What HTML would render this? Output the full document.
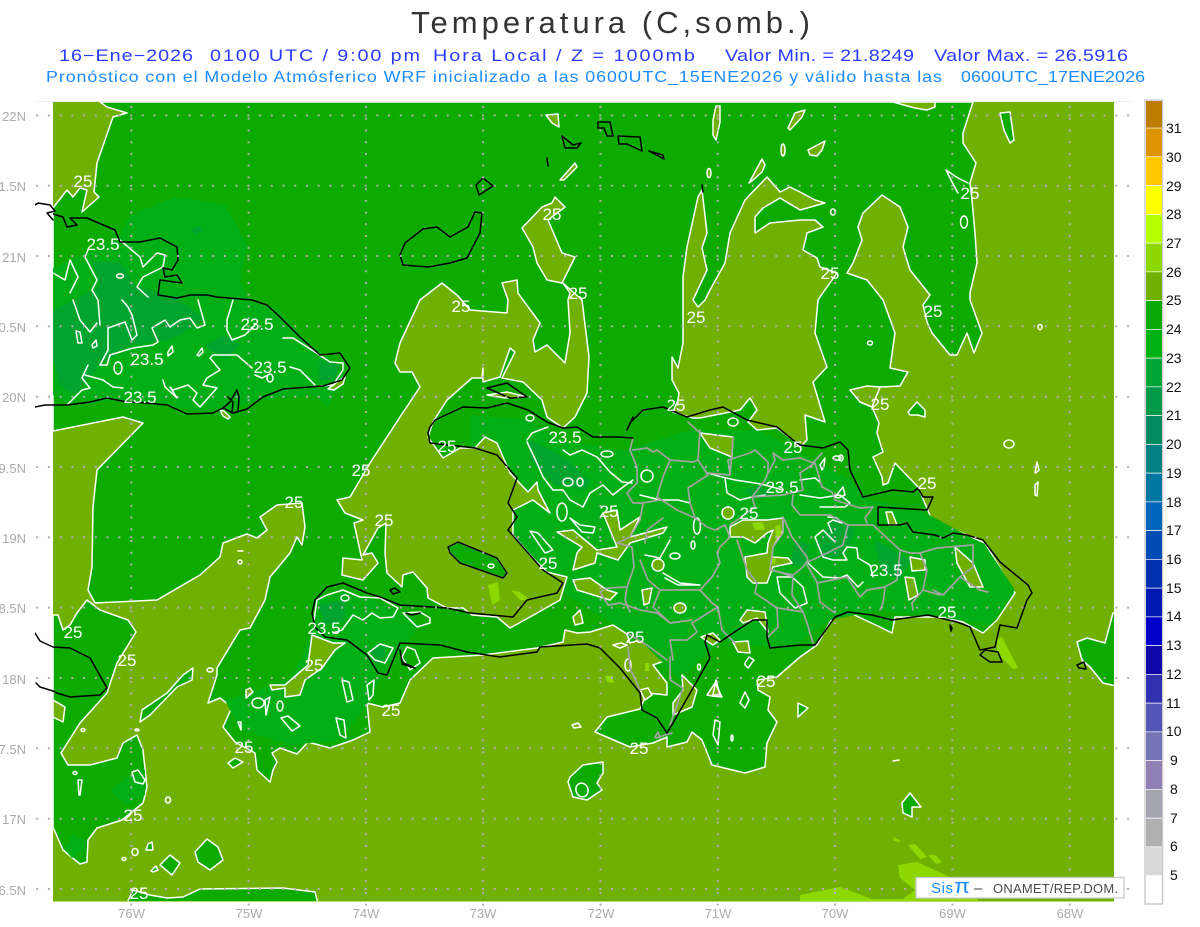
<!DOCTYPE html>
<html><head><meta charset="utf-8"><title>Temperatura</title>
<style>
html,body{margin:0;padding:0;background:#fff;width:1200px;height:927px;overflow:hidden}
svg{display:block;font-family:"Liberation Sans",sans-serif}
.w{fill:none;stroke:#fff;stroke-width:1.5;stroke-linejoin:round;stroke-linecap:round}
.o{fill:#70b000;stroke:#fff;stroke-width:1.5;stroke-linejoin:round}
.g{fill:#0aaa05;stroke:#fff;stroke-width:1.5;stroke-linejoin:round}
.l{fill:#03ae12;stroke:none}
.d{fill:#00a42e;stroke:none}
.y{fill:#8cd800;stroke:none}
.k{fill:none;stroke:#000;stroke-width:1.5;stroke-linejoin:round;stroke-linecap:round}
.p{fill:none;stroke:#a3a3a3;stroke-width:1.7;stroke-linejoin:round;stroke-linecap:round}
.t{fill:#fff;font-size:17px;text-anchor:middle}
.a{fill:#aaa;font-size:13px}
.c{fill:#111;font-size:14px}
</style></head><body>
<svg width="1200" height="927" viewBox="0 0 1200 927" xmlns="http://www.w3.org/2000/svg">
<defs><filter id="s" x="0" y="0" width="1" height="1"><feGaussianBlur stdDeviation="0.25"/></filter></defs>
<rect width="1200" height="927" fill="#fff"/>
<!-- Titles -->
<text x="411" y="33" font-size="31" fill="#333" textLength="399" lengthAdjust="spacing">Temperatura (C,somb.)</text>
<g font-size="16.5" fill="#2b3cff">
<text transform="translate(59,61) scale(1.2,1)" textLength="111.7" lengthAdjust="spacing">16−Ene−2026</text>
<text transform="translate(210,61) scale(1.2,1)" textLength="175" lengthAdjust="spacing">0100 UTC / 9:00 pm</text>
<text transform="translate(433,61) scale(1.2,1)" textLength="218.3" lengthAdjust="spacing">Hora Local / Z = 1000mb</text>
<text transform="translate(725,61) scale(1.2,1)" textLength="157.5" lengthAdjust="spacing">Valor Min. = 21.8249</text>
<text transform="translate(934,61) scale(1.2,1)" textLength="161.7" lengthAdjust="spacing">Valor Max. = 26.5916</text>
</g>
<g font-size="15.5" fill="#1a8cff">
<text transform="translate(46,82) scale(1.15,1)" textLength="779" lengthAdjust="spacing">Pronóstico con el Modelo Atmósferico WRF inicializado a las 0600UTC_15ENE2026 y válido hasta las</text>
<text transform="translate(961,82) scale(1.15,1)" textLength="160" lengthAdjust="spacing">0600UTC_17ENE2026</text>
</g>
<line x1="34" y1="101.5" x2="1134" y2="101.5" stroke="#eee"/>
<clipPath id="m"><rect x="53" y="102" width="1061" height="799"/></clipPath>
<rect x="53" y="102" width="1061" height="799" fill="#70b000"/>
<g filter="url(#s)">
<g clip-path="url(#m)">
<!-- main green -->
<polygon class="g" points="100,102 107,107 127,113 113,117 97,163 94,192 99,197 82,212 87,190 80,188 73,197 67,190 53,208 53,431 123,417 143,423 97,470 93,507 92,567 88,590 95,603 157,600 200,575 220,557 223,543 247,534 257,538 267,530 260,517 277,505 302,503 305,527 302,545 297,537 290,553 270,577 265,600 250,628 240,630 217,668 217,675 208,703 220,698 232,707 223,727 235,742 255,753 257,770 270,782 273,770 277,762 272,753 280,748 297,754 308,742 330,748 353,740 370,732 367,703 383,707 400,703 410,680 433,658 483,655 537,648 563,642 565,630 577,633 590,632 613,625 627,634 630,643 640,640 655,645 667,660 653,665 667,683 667,695 647,693 640,709 607,717 595,732 630,747 653,743 667,737 667,747 687,742 692,732 702,740 712,765 745,773 765,767 767,743 777,722 768,710 770,697 758,690 757,680 777,677 800,657 817,645 833,617 848,612 880,627 892,633 895,617 940,617 963,622 983,633 997,620 1015,593 985,543 955,530 932,520 918,487 895,463 888,483 883,485 882,477 873,457 883,452 877,433 879,423 872,407 880,387 900,386 908,372 890,368 895,333 883,300 867,280 847,273 853,263 862,240 858,227 863,213 882,195 900,207 908,227 903,247 910,270 930,295 923,305 927,322 932,333 950,355 957,355 967,333 974,353 982,333 970,300 970,293 977,263 975,233 972,200 970,183 976,163 963,143 963,133 973,102"/>
<!-- Soft shade patches -->
<polygon class="l" points="53,268 90,250 118,238 130,215 175,197 225,205 247,245 240,280 248,300 280,310 300,335 330,360 345,375 328,407 315,395 260,400 230,410 190,410 130,400 70,405 53,395"/>
<polygon class="d" points="53,310 75,300 100,285 92,262 120,262 135,285 180,300 205,320 170,340 130,345 100,365 75,395 60,385 53,360"/>
<polygon class="d" points="320,360 340,365 335,380 318,380"/>
<polygon class="d" points="190,230 198,226 204,230 196,234"/>
<polygon class="d" points="205,345 225,335 240,345 225,360"/>
<polygon class="l" points="470,415 530,420 560,440 625,450 690,430 760,430 850,480 870,500 920,510 985,545 1015,590 990,625 960,620 880,610 830,620 790,650 720,640 680,680 640,640 590,610 560,590 510,530 470,470"/>
<polygon class="d" points="530,440 560,455 590,480 585,490 555,485 530,460"/>
<polygon class="d" points="835,515 855,530 845,555 825,560 815,545"/>
<polygon class="d" points="795,540 810,545 805,565 790,565"/>
<polygon class="d" points="745,490 760,485 770,495 755,500"/>
<polygon class="d" points="875,540 910,560 900,580 880,570"/>
<polygon class="l" points="317,600 345,590 400,610 420,625 385,670 370,700 340,740 290,745 240,730 225,700 290,680 310,640"/>
<polygon class="d" points="318,605 345,600 345,620 325,625"/>
<polygon class="d" points="370,650 385,645 385,660 375,665"/>
<polygon class="l" points="65,810 90,775 120,760 145,770 140,800 100,825 70,825"/>
<!-- Central olive -->
<polygon class="o" points="420,300 442,283 457,295 470,310 507,313 508,300 502,283 517,280 518,293 523,300 540,323 533,340 535,352 547,345 565,363 570,333 568,300 570,293 563,283 582,300 589,357 587,393 575,417 563,428 547,417 542,400 523,382 502,378 515,352 510,348 500,377 483,382 483,368 482,378 472,378 447,400 433,422 428,437 443,458 460,448 475,448 485,437 497,443 510,473 528,492 537,482 538,490 550,513 533,500 513,510 513,535 532,557 547,572 567,577 563,590 560,600 530,617 510,628 497,617 472,615 463,608 447,608 428,598 427,588 413,572 403,575 402,587 387,573 385,553 386,523 378,528 363,555 372,553 378,563 363,580 342,575 343,558 362,560 354,523 363,520 345,513 337,500 350,497 370,463 400,417 420,387 412,372 400,372 395,363 400,343"/>
<polygon class="o" points="555,197 565,207 548,220 562,253 575,257 562,283 547,280 537,263 533,247 522,228 542,207 552,203"/>
<!-- Gonave -->
<polygon class="g" points="448,547 458,542 497,558 507,573 503,578 460,563 450,553"/>
<ellipse class="w" cx="491" cy="566" rx="3" ry="2"/>
<!-- Tortuga olive -->
<polygon class="o" points="487,395 507,392 527,397 505,398"/>
<!-- Cuba south slivers -->
<polygon class="o" points="220,410 224,411 230,417 228,419 223,416"/>
<polygon class="o" points="328,389 340,380 345,377 343,384 334,390"/>
<!-- Olive C -->
<polygon class="o" points="767,177 780,192 790,187 800,192 815,200 825,203 800,210 780,198 763,208 755,217 755,233 770,223 800,220 815,220 823,227 807,233 803,250 817,258 820,267 837,273 820,297 818,300 815,333 827,367 813,382 825,422 805,415 807,440 800,447 793,440 777,428 757,430 748,422 757,410 750,398 740,410 700,418 693,418 673,412 678,400 679,393 672,380 672,357 678,368 683,343 683,277 687,247 698,197 702,190 707,233 702,248 707,270 693,300 698,307 705,300 710,290 725,263 730,233 745,200"/>
<!-- Upper small olive -->
<polygon class="o" points="788,128 795,113 805,110 802,117 790,130"/>
<polygon class="o" points="713,120 716,106 720,106 720,122 716,140 713,135"/>
<polygon class="o" points="749,183 762,159 765,165 762,172 753,180"/>
<polygon class="o" points="808,150 825,141 822,150 817,156 810,155"/>
<polygon class="o" points="893,102 915,108 927,110 935,107 935,102"/>
<polygon class="o" points="546,115 558,114 559,127 552,123"/>
<polygon class="o" points="560,180 575,163 577,167 564,180"/>
<polygon class="o" points="880,387 867,386 850,390 860,402 872,407"/>
<ellipse class="o" cx="783" cy="150" rx="2" ry="6"/>
<ellipse class="o" cx="709" cy="173" rx="2" ry="4.5"/>
<!-- Spur on the right -->
<polyline class="w" points="968,183 958,178 946,170 952,182 958,193"/>
<ellipse class="w" cx="964" cy="222" rx="3.5" ry="6"/>
<ellipse class="w" cx="833" cy="212" rx="2.5" ry="3"/>
<!-- Other green bodies -->
<polygon class="g" points="1000,113 1010,112 1014,140 1010,143 1004,130"/>
<polygon class="g" points="53,615 58,615 63,630 70,625 77,613 87,600 100,610 128,620 136,632 117,663 107,693 80,723 61,753 68,765 90,765 117,758 123,743 137,735 143,750 147,787 143,803 122,820 97,828 88,840 87,862 80,864 63,850 53,827"/>
<polygon class="o" points="53,700 65,707 63,722 53,717"/>
<polygon class="l" points="110,790 130,775 145,770 145,795 125,805"/>
<polygon class="l" points="65,850 72,835 85,840 85,850 72,858"/>
<polygon class="g" points="140,722 142,710 167,693 183,675 193,668 192,680 177,687 150,715"/>
<polygon class="g" points="195,852 207,839 218,847 223,860 210,870 198,862"/>
<polygon class="g" points="160,865 170,855 180,863 172,875"/>
<polygon class="g" points="127,903 133,890 150,895 167,898 183,897 200,889 283,888 315,892 318,903"/>
<polygon class="g" points="146,850 148,844 152,842 153,850"/>
<polygon class="g" points="151,871 156,866 158,870 153,872"/>
<polygon class="g" points="228,763 235,758 243,762 233,768"/>
<polygon class="g" points="570,777 583,765 603,762 603,773 597,783 602,790 587,800 573,797 568,782"/>
<ellipse class="w" cx="582" cy="790" rx="6" ry="7" transform="rotate(-20 582 790)"/>
<polygon class="g" points="798,703 808,708 798,717"/>
<polygon class="g" points="902,803 910,793 921,807 912,807 912,817 903,813"/>
<polygon class="g" points="908,412 917,402 925,410 925,417 918,415 910,415"/>
<polygon class="g" points="1113,613 1105,643 1087,638 1077,642 1082,660 1090,667 1103,683 1116,686 1116,613"/>
<polygon class="o" points="573,617 580,610 583,623 575,625"/>
<!-- Olive holes on peninsula -->
<polygon class="o" points="300,695 305,680 322,668 335,650 345,643 333,643 325,640 312,635 308,665 285,685 270,685 272,690 285,688 285,697"/>
<polygon class="o" points="246,690 250,688 253,692 246,698"/>
<!-- Hispaniola olive holes -->
<polygon class="o" points="557,532 573,530 597,550 617,547 603,513 617,510 620,530 640,517 630,537 667,527 663,533 630,543 618,560 597,553 595,563 573,570 577,553 582,547"/>
<polygon class="o" points="700,433 733,437 732,457 710,448"/>
<polygon class="o" points="730,527 743,520 767,520 783,518 783,530 773,547 772,557 788,558 792,563 782,565 773,567 767,583 753,583 747,577 745,557 767,553 768,543 773,530 767,533 755,543 743,537 730,537"/>
<polygon class="y" points="752,523 763,522 765,530 755,530"/>
<polygon class="y" points="775,526 780,525 782,535 776,538"/>
<polygon class="y" points="771,557 776,558 775,564 771,563"/>
<polygon class="o" points="573,580 590,578 607,590 617,593 610,600 577,590"/>
<polygon class="o" points="701,637 713,633 720,640 713,645"/>
<polygon class="o" points="740,620 747,610 765,612 768,632 757,618 743,623"/>
<polygon class="o" points="733,642 748,641 750,653 738,652"/>
<polygon class="o" points="682,675 697,690 692,707 673,715 673,703 683,690"/>
<polygon class="o" points="707,695 715,683 722,697 712,696"/>
<polygon class="o" points="910,557 925,560 925,570 912,571"/>
<polygon class="o" points="955,547 973,563 983,587 970,587 957,563"/>
<polygon class="o" points="886,512 892,512 897,525 889,525"/>
<polygon class="o" points="905,577 914,578 918,595 909,600"/>
<polygon class="o" points="642,590 652,588 649,603 644,605"/>
<ellipse class="o" cx="680" cy="608" rx="6" ry="5"/>
<ellipse class="o" cx="658" cy="565" rx="6" ry="6"/>
<ellipse class="o" cx="728" cy="513" rx="6" ry="6"/>
<ellipse class="w" cx="697" cy="526" rx="3.5" ry="8"/>
<ellipse class="o" cx="628" cy="665" rx="3" ry="6"/>
<ellipse class="w" cx="647" cy="476" rx="6" ry="6"/>
<polygon class="o" points="613,645 621,643 627,645 620,648"/>
<polygon class="o" points="572,725 578,723 581,727 574,728"/>
<polygon class="o" points="640,690 648,688 652,695 645,700"/>
<!-- Yellow-green patches -->
<polygon class="y" points="893,837 900,840 899,842 894,841"/>
<polygon class="y" points="908,845 915,844 927,857 920,859"/>
<polygon class="y" points="928,855 935,855 942,862 936,864"/>
<polygon class="y" points="898,865 917,862 950,877 977,901 900,901 915,890 900,878"/>
<polygon class="y" points="800,895 840,887 877,901 800,901"/>
<rect x="860" y="899" width="118" height="2" class="y"/>
<polygon class="y" points="997,638 1002,637 1018,668 1013,669 997,653"/>
<polygon class="y" points="488,585 498,582 500,600 492,605"/>
<polygon class="y" points="511,590 520,592 530,600 520,600"/>
<polygon class="y" points="605,676 612,676 614,683 607,682"/>
<rect x="645" y="663" width="4" height="8" class="y"/>
<!-- 23.5 contours -->
<g class="w">
<polyline points="88,250 85,257 97,280 92,290 98,300 100,325"/>
<polyline points="73,300 80,320 90,332 97,323"/>
<polyline points="100,365 108,350 108,328 125,322 132,340 137,335 132,315 128,307 122,300"/>
<polyline points="100,365 107,365 110,355 133,348 153,345 158,342 152,328 165,320 170,327 180,320 190,318 197,328 205,325 198,300"/>
<polyline points="233,300 227,320 227,330 232,340 245,335 255,325"/>
<polyline points="283,338 293,338 315,352 330,362 343,363 343,370 333,385 320,386"/>
<polyline points="290,367 300,370 315,385"/>
<polyline points="252,368 237,355 213,355 210,358 220,370 207,378 203,385 217,388 200,407 193,400 197,393 188,385 173,390 170,387 177,398 165,387 163,380"/>
<polyline points="88,365 82,378 90,388 82,390 72,400 67,405"/>
<polyline points="85,375 103,380 113,387 123,388"/>
<polyline points="120,240 140,257 143,267 157,253 165,255 163,267 143,277 137,287 148,297"/>
<polyline points="53,273 65,280 70,260 78,277 70,293"/>
<polygon points="76,331 80,332 82,343 78,343"/>
<polygon points="92,345 96,340 97,346 93,348"/>
<polygon points="168,352 172,346 173,352 168,356"/>
<polygon points="197,355 202,348 203,352 199,356"/>
<ellipse cx="118" cy="368" rx="4" ry="6"/>
<ellipse cx="120" cy="276" rx="3.5" ry="2"/>
<polyline points="255,375 262,378 268,375"/>
<ellipse cx="270" cy="378" rx="3" ry="4"/>
<polyline points="314,620 317,600 327,595 343,590 360,597 380,598 398,608 393,617 380,618 372,613 363,620 353,615 342,630 333,633"/>
<polyline points="403,613 420,612 430,618 430,623 417,627 403,613"/>
<ellipse cx="345" cy="598" rx="4" ry="3"/>
<polygon points="368,653 380,644 393,648 385,663 375,660"/>
<polygon points="402,657 407,647 415,650 420,663 410,670"/>
<polygon points="367,685 374,680 373,695 369,700"/>
<polygon points="342,680 349,682 353,700 347,702"/>
<polygon points="265,700 270,697 266,715"/>
<ellipse cx="258" cy="703" rx="6" ry="5"/>
<ellipse cx="280" cy="706" rx="3" ry="5"/>
<polygon points="281,718 288,716 300,726 292,731"/>
<polygon points="336,718 344,720 346,738 340,735"/>
<polygon points="238,722 241,722 241,730"/>
<polygon points="132,772 138,770 145,780 143,784 135,782"/>
<polygon points="78,780 82,780 80,795 79,795"/>
<ellipse cx="75" cy="773" rx="2" ry="1.5"/>
<ellipse cx="137" cy="730" rx="2" ry="1"/>
<polyline points="527,440 532,433 548,427"/>
<polyline points="527,442 537,463 543,477 553,490 563,490 570,500 583,507 590,493 603,485 613,495 623,487 633,480"/>
<polyline points="563,450 570,455 582,450 597,457 610,472 622,482 632,483"/>
<ellipse cx="530" cy="418" rx="4" ry="3"/>
<ellipse cx="568" cy="482" rx="5" ry="4"/>
<ellipse cx="580" cy="482" rx="3" ry="4"/>
<ellipse cx="607" cy="454" rx="6" ry="3"/>
<ellipse cx="562" cy="512" rx="5" ry="9"/>
<polygon points="570,518 580,525 595,527 593,533 582,532"/>
<polygon points="530,531 538,533 553,550 545,553"/>
<polyline points="708,473 718,476 735,480 755,483 765,485 783,490"/>
<polyline points="725,478 727,493 740,500 752,497 765,495"/>
<polyline points="847,547 843,553 847,560 833,560 823,557 815,537 823,530 830,537 835,542"/>
<polyline points="808,563 823,577 840,578 847,575 858,587 863,582"/>
<polyline points="847,547 857,548 858,558 870,565 873,577"/>
<polyline points="828,517 837,518 842,523 833,520 828,523 832,533"/>
<polygon points="777,577 780,593 795,608 807,603 803,587 792,577"/>
<polyline points="663,573 680,583 700,585 678,585 665,578"/>
<polyline points="640,495 660,500 678,500 690,503"/>
<polyline points="645,555 660,558 670,540"/>
<ellipse cx="675" cy="556" rx="5" ry="3"/>
<ellipse cx="693" cy="545" rx="2" ry="4"/>
<ellipse cx="733" cy="422" rx="5" ry="4"/>
<ellipse cx="837" cy="458" rx="4" ry="2"/>
<ellipse cx="841" cy="458" rx="2" ry="3"/>
<polygon points="820,465 825,458 824,466 822,470"/>
<polygon points="835,497 843,487 845,495 838,498"/>
<polyline points="800,480 815,478 820,482"/>
<polyline points="800,495 820,498 840,495 850,503 845,507 820,507"/>
<polygon points="745,663 749,657 754,660 748,668 745,665"/>
<ellipse cx="699" cy="667" rx="1.5" ry="3"/>
<polygon points="745,692 749,700 745,708 740,703"/>
<polygon points="713,695 716,680 720,695"/>
<polygon points="715,720 720,722 718,745 713,735"/>
<ellipse cx="732" cy="738" rx="1" ry="3"/>
<ellipse cx="1040" cy="327" rx="2" ry="2.5"/>
<ellipse cx="1009" cy="444" rx="5" ry="4"/>
<polygon points="1035,473 1037,462 1039,470 1037,472"/>
<polygon points="1035,485 1038,482 1037,496 1035,495"/>
<ellipse cx="870" cy="343" rx="2.5" ry="2"/>
<ellipse cx="168" cy="800" rx="2.5" ry="3"/>
<ellipse cx="124" cy="859" rx="2" ry="1.5"/>
<ellipse cx="135" cy="852" rx="3" ry="3.5"/>
<ellipse cx="83" cy="730" rx="2" ry="1.5"/>
<ellipse cx="210" cy="670" rx="3" ry="2"/>
<ellipse cx="240" cy="562" rx="2" ry="2"/>
<polyline points="238,551 243,551"/>
<polyline points="893,761 899,760"/>
</g>
<!-- Grey provinces -->
<g class="p">
<polyline points="633,438 630,450 637,467 637,483 627,493 633,503 643,503 640,520 630,537 617,543 632,547 634,567 627,587 625,600 630,612"/>
<polyline points="700,430 698,460 693,462 670,460 657,450 653,452 647,448 633,450"/>
<polyline points="670,460 663,477 657,497 660,500 643,503"/>
<polyline points="657,497 677,510 695,518 707,527 715,530 725,525 730,537 720,547 717,553 720,563 712,577 700,590 660,590 648,580 640,560"/>
<polyline points="695,518 690,503 688,488 708,475 698,460"/>
<polyline points="708,473 730,475 728,460 750,453 755,450 768,462 768,473 775,460 773,453 783,460 800,458 813,463 822,453"/>
<polyline points="768,473 765,480 752,497 755,507 740,518 730,525"/>
<polyline points="752,497 783,495 803,490 800,473 815,463 822,487 832,492 835,500 860,508 873,507 865,518 867,523"/>
<polyline points="793,495 792,505 800,515 830,515 848,525 873,525 900,550 910,553 920,553 937,548"/>
<polyline points="783,517 792,537 807,557 808,562 827,553 843,545 848,525"/>
<polyline points="783,517 783,533 773,547 770,570 793,575 803,567 808,560"/>
<polyline points="793,577 792,595 803,612 807,623 813,643"/>
<polyline points="807,565 817,582 820,602 835,613"/>
<polyline points="817,583 847,577 860,597 867,590 885,587 883,603 880,610"/>
<polyline points="900,552 897,580 885,587"/>
<polyline points="920,553 927,570 923,590 912,603 913,610"/>
<polyline points="923,590 940,595"/>
<polyline points="937,548 973,545 973,567 960,577 943,595 933,590"/>
<polyline points="960,577 980,590 988,592"/>
<polyline points="737,540 747,570 757,583 755,593 777,608 778,627 767,638"/>
<polyline points="773,570 793,577"/>
<polyline points="778,608 803,612"/>
<polyline points="645,543 647,530 663,518"/>
<polyline points="700,590 712,603 718,607 708,613 692,623 697,632 687,640 670,640 673,660"/>
<polyline points="660,590 653,607 670,623 692,620"/>
<polyline points="718,607 722,630 735,643"/>
<polyline points="627,587 607,588 600,592 608,605 620,603 640,610 657,613 670,623"/>
<polyline points="627,633 647,645 667,660"/>
<polyline points="628,647 630,668 640,690"/>
<polyline points="670,657 670,680 683,688 677,705 670,725"/>
<polyline points="656,738 665,735 672,733"/>
<polyline points="655,737 658,732 660,738"/>
<polyline points="700,433 688,422"/>
<polyline points="730,475 732,453 733,437"/>
</g>
<!-- Black coast -->
<g class="k">
<polyline points="53,214 63,217 67,227 77,225 70,218 87,218 115,230 120,242 140,242 160,238 177,247 178,260 172,270 163,268 165,277 177,275 182,283 160,280 158,295 177,298 190,295 207,295 217,297 252,300 267,305 280,317 300,337 320,355 340,353 350,368 342,380 323,386 283,389 263,397 247,409 233,413 223,408 213,413 187,414 167,405 147,403 127,402 107,398 90,402 67,405 53,405"/>
<polyline points="223,408 230,402 237,390 239,397 238,412 232,413 233,402 228,397"/>
<polyline points="53,647 70,648 90,658 107,688 100,695 70,697 57,693 53,691"/>
<polygon points="400,255 405,243 423,229 437,227 450,237 468,227 475,212 482,213 480,233 467,258 450,263 428,267 403,265"/>
<polygon points="476,185 483,178 493,186 479,195"/>
<polygon points="562,136 573,145 581,143 577,148 565,148"/>
<polygon points="598,122 610,122 613,136 607,136 604,128 598,128"/>
<polygon points="618,136 640,137 642,151 627,144 619,144"/>
<polygon points="649,151 663,155 664,159"/>
<polyline points="547,158 548,166"/>
<polyline points="702,185 703,192"/>
<polyline points="428,433 430,427 435,420 463,407 487,408 507,403 528,410 547,422 563,428 577,427 593,437 617,437 633,438"/>
<polyline points="633,417 627,430 630,423 643,410 663,407 687,417 710,410 723,407 747,420 777,427 793,440 800,445 823,448 840,442 848,450 850,470 863,497 893,490 913,492 918,488 923,497 933,497 927,510 878,507 878,525 900,525 907,523 913,532 935,535 943,538 953,533 967,535 983,540 1000,562 1028,585 1032,593 1027,600 1017,628 1000,625 995,647 980,650 970,627 957,622 928,615 892,620 872,615 848,612 835,617 815,645 800,645 770,648 767,637 767,620 753,620 733,633 720,642 707,635 705,642 710,658 693,688 673,723 667,733 657,718 642,710 640,693 620,668 600,648 587,644 540,647 537,652 500,657 467,652 440,645 400,643 387,675 378,673 367,655 347,640 325,637 315,627 312,613 315,600 327,587 343,583 367,593 380,597 400,605 447,608 470,613 513,617 527,600 557,593 563,583 543,570 508,530 517,517 508,503 517,478 497,455 475,448 430,443 428,433"/>
<polygon points="448,547 458,542 497,558 507,573 503,578 460,563 450,553"/>
<polygon points="487,388 507,383 527,397 510,398"/>
<polygon points="985,650 998,652 1002,662 990,662 980,655"/>
<polygon points="1077,665 1084,662 1086,669 1079,668"/>
<polygon points="950,625 952,628 951,631"/>
<polyline points="400,650 402,662 415,668 402,664"/>
<polyline points="406,613 412,615 420,613"/>
<polygon points="390,590 395,588 400,592 393,594"/>
</g>
</g>
<!-- Coast stubs reaching past the map's left edge -->
<g class="k">
<polyline points="35,205 38,203 50,205 55,211 47,213 53,220"/>
<polyline points="53,405 45,405 35,407"/>
<polyline points="35,633 40,641 53,647"/>
<polyline points="36,683 40,687 53,691"/>
</g>
<line x1="53" y1="901.5" x2="1114" y2="901.5" stroke="#b4dc70" stroke-width="1"/>
</g>
<!-- Grid dots -->
<g stroke="#b3adb3" stroke-width="2" fill="none">
<g stroke-dasharray="2 9.73" stroke-dashoffset="-6.2">
<line x1="30" y1="115.5" x2="1134" y2="115.5"/><line x1="30" y1="185.8" x2="1134" y2="185.8"/>
<line x1="30" y1="256" x2="1134" y2="256"/><line x1="30" y1="326.3" x2="1134" y2="326.3"/>
<line x1="30" y1="396.7" x2="1134" y2="396.7"/><line x1="30" y1="467" x2="1134" y2="467"/>
<line x1="30" y1="537.3" x2="1134" y2="537.3"/><line x1="30" y1="607.6" x2="1134" y2="607.6"/>
<line x1="30" y1="678" x2="1134" y2="678"/><line x1="30" y1="748.3" x2="1134" y2="748.3"/>
<line x1="30" y1="818.7" x2="1134" y2="818.7"/><line x1="30" y1="889" x2="1134" y2="889"/>
</g>
<g stroke-dasharray="2 9.73" stroke-dashoffset="-2">
<line x1="131.3" y1="104" x2="131.3" y2="908"/><line x1="248.6" y1="104" x2="248.6" y2="908"/>
<line x1="365.9" y1="104" x2="365.9" y2="908"/><line x1="483.2" y1="104" x2="483.2" y2="908"/>
<line x1="600.5" y1="104" x2="600.5" y2="908"/><line x1="717.8" y1="104" x2="717.8" y2="908"/>
<line x1="835.1" y1="104" x2="835.1" y2="908"/><line x1="952.4" y1="104" x2="952.4" y2="908"/>
<line x1="1069.7" y1="104" x2="1069.7" y2="908"/>
</g>
</g>
<!-- Contour labels -->
<g class="t">
<text x="83" y="187">25</text><text x="103" y="250">23.5</text><text x="257" y="330">23.5</text>
<text x="147" y="365">23.5</text><text x="270" y="373">23.5</text><text x="140" y="403">23.5</text>
<text x="552" y="220">25</text><text x="578" y="299">25</text><text x="461" y="312">25</text>
<text x="696" y="323">25</text><text x="830" y="279">25</text><text x="970" y="199">25</text>
<text x="933" y="317">25</text><text x="880" y="410">25</text><text x="676" y="411">25</text>
<text x="447" y="452">25</text><text x="565" y="443">23.5</text><text x="793" y="453">25</text>
<text x="361" y="476">25</text><text x="782" y="493">23.5</text><text x="927" y="489">25</text>
<text x="294" y="508">25</text><text x="384" y="526">25</text><text x="609" y="517">25</text>
<text x="749" y="519">25</text><text x="548" y="569">25</text><text x="886" y="576">23.5</text>
<text x="947" y="618">25</text><text x="324" y="634">23.5</text><text x="73" y="638">25</text>
<text x="635" y="643">25</text><text x="127" y="666">25</text><text x="314" y="671">25</text>
<text x="766" y="687">25</text><text x="391" y="716">25</text><text x="244" y="753">25</text>
<text x="639" y="754">25</text><text x="133" y="821">25</text><text x="139" y="899">25</text>
</g>
<!-- Axis labels -->
<g class="a" text-anchor="end">
<text x="26" y="121">22N</text><text x="26" y="191">1.5N</text><text x="26" y="262">21N</text>
<text x="26" y="332">0.5N</text><text x="26" y="402">20N</text><text x="26" y="473">9.5N</text>
<text x="26" y="543">19N</text><text x="26" y="613">8.5N</text><text x="26" y="684">18N</text>
<text x="26" y="754">7.5N</text><text x="26" y="824">17N</text><text x="26" y="895">6.5N</text>
</g>
<g class="a" text-anchor="middle">
<text x="131.5" y="918">76W</text><text x="249" y="918">75W</text><text x="366" y="918">74W</text>
<text x="483" y="918">73W</text><text x="601" y="918">72W</text><text x="718" y="918">71W</text>
<text x="835" y="918">70W</text><text x="952.5" y="918">69W</text><text x="1070" y="918">68W</text>
</g>
<!-- Color bar -->
<rect x="1145" y="100" width="17.5" height="804" fill="#fff" stroke="#ccc" stroke-width="1.5"/>
<g stroke="none">
<rect x="1146" y="101" width="16" height="26.7" fill="#bc7c00"/>
<rect x="1146" y="128.4" width="16" height="28" fill="#dc9400"/>
<rect x="1146" y="157" width="16" height="28" fill="#ffc800"/>
<rect x="1146" y="186" width="16" height="28" fill="#ffff00"/>
<rect x="1146" y="214.7" width="16" height="28" fill="#b4ff00"/>
<rect x="1146" y="243.5" width="16" height="28" fill="#8cd800"/>
<rect x="1146" y="272.2" width="16" height="28" fill="#70b000"/>
<rect x="1146" y="301" width="16" height="28" fill="#0aaa05"/>
<rect x="1146" y="329.7" width="16" height="28" fill="#00b114"/>
<rect x="1146" y="358.5" width="16" height="28" fill="#00a535"/>
<rect x="1146" y="387.2" width="16" height="28" fill="#009a48"/>
<rect x="1146" y="416" width="16" height="28" fill="#008a60"/>
<rect x="1146" y="444.7" width="16" height="28" fill="#008080"/>
<rect x="1146" y="473.5" width="16" height="28" fill="#0077a0"/>
<rect x="1146" y="502.2" width="16" height="28" fill="#0066bb"/>
<rect x="1146" y="531" width="16" height="28" fill="#004cb4"/>
<rect x="1146" y="559.7" width="16" height="28" fill="#0030b0"/>
<rect x="1146" y="588.5" width="16" height="28" fill="#0018b0"/>
<rect x="1146" y="617.2" width="16" height="28" fill="#0000c8"/>
<rect x="1146" y="646" width="16" height="28" fill="#1008a8"/>
<rect x="1146" y="674.7" width="16" height="28" fill="#3030b0"/>
<rect x="1146" y="703.5" width="16" height="28" fill="#5555b5"/>
<rect x="1146" y="732.2" width="16" height="28" fill="#7575b5"/>
<rect x="1146" y="761" width="16" height="28" fill="#9080b5"/>
<rect x="1146" y="789.7" width="16" height="28" fill="#a5a5b0"/>
<rect x="1146" y="818.5" width="16" height="28" fill="#b0b0b0"/>
<rect x="1146" y="847.2" width="16" height="28" fill="#d8d8d8"/>
</g>
<g class="c">
<text x="1166" y="133">31</text><text x="1166" y="162">30</text><text x="1166" y="191">29</text>
<text x="1166" y="219">28</text><text x="1166" y="248">27</text><text x="1166" y="277">26</text>
<text x="1166" y="305">25</text><text x="1166" y="334">24</text><text x="1166" y="363">23</text>
<text x="1166" y="392">22</text><text x="1166" y="420">21</text><text x="1166" y="449">20</text>
<text x="1166" y="478">19</text><text x="1166" y="507">18</text><text x="1166" y="535">17</text>
<text x="1166" y="564">16</text><text x="1166" y="593">15</text><text x="1166" y="621">14</text>
<text x="1166" y="650">13</text><text x="1166" y="679">12</text><text x="1166" y="708">11</text>
<text x="1166" y="736">10</text><text x="1170" y="765">9</text><text x="1170" y="794">8</text>
<text x="1170" y="823">7</text><text x="1170" y="851">6</text><text x="1170" y="880">5</text>
</g>
<!-- Credit box -->
<rect x="916" y="877.5" width="208" height="20.5" fill="#fff" stroke="#c8c8c8" stroke-width="1.3"/>
<text x="931" y="893" font-size="15" fill="#1a8cff" textLength="22" lengthAdjust="spacing">Sis</text>
<text x="954" y="893" font-size="20" fill="#1a8cff" textLength="16" lengthAdjust="spacingAndGlyphs">π</text>
<text x="974" y="893" font-size="15" fill="#444">–</text>
<text x="993" y="893" font-size="13" fill="#4a4a4a" textLength="125" lengthAdjust="spacing">ONAMET/REP.DOM.</text>
</svg>
</body></html>
